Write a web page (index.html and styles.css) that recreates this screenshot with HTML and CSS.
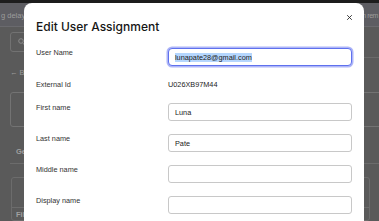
FILE: index.html
```html
<!DOCTYPE html>
<html lang="en">
<head>
<meta charset="utf-8">
<title>Edit User Assignment</title>
<link rel="stylesheet" href="styles.css">
</head>
<body>
<div class="page">
  <div class="topstrip"></div>
  <div class="banner">
    <span class="banner-left">g delay</span>
    <span class="banner-right">n rem</span>
  </div>
  <div class="toolbar">
    <div class="search-area">
      <div class="search">
        <svg class="search-icon" width="7" height="8" viewBox="0 0 7 8"><circle cx="3" cy="3" r="2.3" fill="none" stroke="#8a8a8a" stroke-width="1"/><line x1="4.7" y1="4.8" x2="6.5" y2="7" stroke="#8a8a8a" stroke-width="1"/></svg>
      </div>
    </div>
    <div class="toolbar-rest"></div>
  </div>
  <div class="back">&larr; Back</div>
  <div class="card"></div>
  <div class="section-title">General</div>
  <div class="divider"></div>
  <div class="box">
    <div class="box-top"><span class="blue-btn"></span></div>
    <div class="box-label">Filter</div>
  </div>
</div>

<div class="modal" role="dialog" aria-labelledby="modal-title">
  <div class="modal-header">
    <h1 class="modal-title" id="modal-title">Edit User Assignment</h1>
    <svg class="close" width="7" height="7" viewBox="0 0 7 7" aria-label="Close"><line x1="1.2" y1="1.2" x2="5.8" y2="5.8" stroke="#2a2a2a" stroke-width="0.9"/><line x1="5.8" y1="1.2" x2="1.2" y2="5.8" stroke="#2a2a2a" stroke-width="0.9"/></svg>
  </div>
  <div class="form">
    <label class="label">User Name</label>
    <div class="field field-focus"><span class="selected">lunapate28@gmail.com</span></div>

    <span class="label label-static">External Id</span>
    <span class="value">U026XB97M44</span>

    <label class="label">First name</label>
    <input class="field" type="text" value="Luna">

    <label class="label">Last name</label>
    <input class="field" type="text" value="Pate">

    <label class="label">Middle name</label>
    <input class="field" type="text" value="">

    <label class="label">Display name</label>
    <input class="field" type="text" value="">
  </div>
</div>
</body>
</html>
```

FILE: styles.css
```css
* { box-sizing: border-box; }

html, body {
  margin: 0;
  padding: 0;
}

body {
  width: 379px;
  height: 221px;
  overflow: hidden;
  position: relative;
  background: #5a5a5a;
  font-family: "Liberation Sans", Arial, sans-serif;
}

/* ---------- dimmed page behind the dialog ---------- */
.page {
  color: #9c9c9c;
  font-size: 7.5px;
}

.topstrip {
  height: 3px;
  background: #1d1d1d;
}

.banner {
  height: 24px;
  display: flex;
  justify-content: space-between;
  align-items: center;
  background: #5d5d62;
  border-bottom: 1px solid #6a6a6e;
  padding-top: 1px;
}

.banner-left {
  white-space: nowrap;
  padding-left: 1px;
}

.banner-right {
  white-space: nowrap;
  font-size: 7px;
  letter-spacing: -0.45px;
  padding-right: 1px;
}

.toolbar {
  display: flex;
  height: 31px;
}

.search-area {
  width: 180px;
  padding: 5px 0 0 10px;
}

.search {
  height: 20px;
  border: 1px solid #727272;
  border-radius: 3px;
  display: flex;
  align-items: center;
  padding-left: 7px;
}

.search-icon {
  display: block;
}

.toolbar-rest {
  flex: 1;
  border-bottom: 1px solid #6a6a6a;
}

.back {
  margin: 10px 0 0 10px;
  line-height: 10px;
  height: 10px;
}

.card {
  margin: 14px 0 0 10px;
  width: 400px;
  height: 35px;
  border: 1px solid #737373;
  border-radius: 3px;
}

.section-title {
  margin: 20px 0 0 16px;
  line-height: 10px;
  height: 10px;
  font-weight: bold;
  color: #a0a0a0;
}

.divider {
  margin: 6px 0 0 10px;
  height: 1px;
  background: #6c6c6c;
}

.box {
  margin: 13px 0 0 11px;
  width: 359px;
  border: 1px solid #6c6c6c;
  border-radius: 3px;
}

.box-top {
  padding: 6px 12px;
  height: 30px;
  border-bottom: 1px solid #6c6c6c;
}

.blue-btn {
  display: block;
  width: 40px;
  height: 17px;
  background: #2e3a5c;
  border-radius: 2px;
}

.box-label {
  padding: 2px 0 0 4px;
  line-height: 10px;
  font-weight: bold;
  color: #a0a0a0;
}

/* ---------- dialog ---------- */
.modal {
  position: absolute;
  top: 3px;
  left: 24px;
  width: 340px;
  height: 260px;
  background: #ffffff;
  border-radius: 8px;
  padding: 11px 12px 0 12px;
}

.modal-header {
  display: flex;
  justify-content: space-between;
  align-items: flex-start;
}

.modal-title {
  margin: 6px 0 0 0;
  font-family: Inter, "Liberation Sans", sans-serif;
  font-size: 12px;
  line-height: 14px;
  font-weight: 500;
  color: #161616;
  letter-spacing: 0;
}

.close {
  display: block;
  margin-right: -1px;
}

.form {
  margin-top: 14px;
  display: grid;
  grid-template-columns: 132px 184px;
  row-gap: 13px;
  align-items: start;
}

.label {
  font-size: 7.3px;
  line-height: 10px;
  color: #333333;
}

.label-static,
.value {
  line-height: 11px;
}

.value {
  font-size: 7.3px;
  color: #1c1c1c;
}

.field {
  display: block;
  width: 184px;
  height: 18px;
  margin: 0;
  border: 1px solid #c8c8c8;
  border-radius: 3px;
  padding: 0 6px;
  font-family: "Liberation Sans", Arial, sans-serif;
  font-size: 7.3px;
  color: #222222;
  -webkit-text-fill-color: #222222;
  background: #ffffff;
  outline: none;
}

.field-focus {
  display: flex;
  align-items: center;
  border: 1px solid #5f71ee;
  border-radius: 4px;
  box-shadow: 0 0 0 1.5px rgba(120, 134, 243, 0.6);
}

.selected {
  background: #b5d6fd;
  line-height: 9px;
  color: #1a1a1a;
}
```
